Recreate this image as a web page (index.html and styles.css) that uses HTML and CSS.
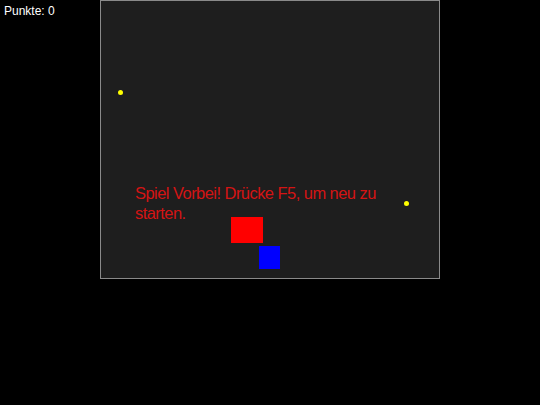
FILE: index.html
```html
<!DOCTYPE html>
<html>
<head>
<meta charset="utf-8">
<link rel="stylesheet" href="styles.css">
</head>
<body>
<div class="score">Punkte: 0</div>
<div class="game">
  <div class="dot dot-a"></div>
  <div class="dot dot-b"></div>
  <div class="msg">Spiel Vorbei! Drücke F5, um neu zu starten.</div>
  <div class="player"></div>
  <div class="enemy"></div>
</div>
</body>
</html>
```
FILE: styles.css
```css
html, body {
  margin: 0;
  padding: 0;
  background: #000;
  width: 540px;
  height: 405px;
  overflow: hidden;
  font-family: "Liberation Sans", Arial, sans-serif;
}
.score {
  position: absolute;
  left: 4px;
  top: 4px;
  color: #fff;
  font-size: 12px;
  line-height: 14px;
}
.game {
  position: relative;
  width: 338px;
  height: 277px;
  margin: 0 auto;
  background: #1e1e1e;
  border: 1px solid #8a8a8a;
  box-sizing: content-box;
}
.dot {
  position: absolute;
  width: 5px;
  height: 5px;
  border-radius: 50%;
  background: #ffff00;
}
.dot-a { left: 17px; top: 89px; }
.dot-b { left: 303px; top: 200px; }
.msg {
  position: absolute;
  left: 34px;
  top: 182px;
  width: 250px;
  color: #d41414;
  font-size: 16.5px;
  letter-spacing: -0.55px;
  line-height: 20px;
}
.player {
  position: absolute;
  left: 130px;
  top: 216px;
  width: 32px;
  height: 26px;
  background: #ff0000;
}
.enemy {
  position: absolute;
  left: 158px;
  top: 245px;
  width: 21px;
  height: 23px;
  background: #0000ff;
}
```
